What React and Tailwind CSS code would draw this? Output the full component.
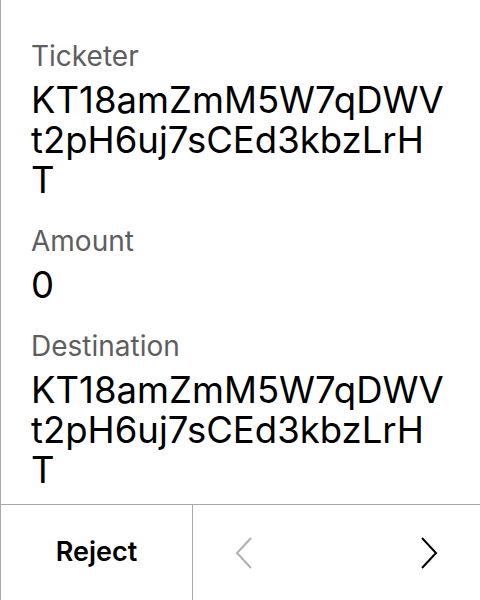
import React from 'react';

// address wraps the same way the device shows it
const Field = ({ label, lines }) => (
  <div className="flex flex-col">
    <p className="text-[28px] leading-9 text-[#5e5e5e]">{label}</p>
    <div className="mt-1.5 text-[36.5px] leading-10 text-black whitespace-nowrap">
      {lines.map((line, i) => (
        <p key={i}>{line}</p>
      ))}
    </div>
  </div>
);

const App = () => {
  const address = ['KT18amZmM5W7qDWV', 't2pH6uj7sCEd3kbzLrH', 'T'];

  return (
    <div className="w-[480px] h-[600px] bg-white flex flex-col border-l border-[#aaaaaa] font-['Inter',sans-serif]">
      <div className="flex-1 flex flex-col gap-[23px] pl-[30px] pr-[30px] pt-[38px]">
        <Field label="Ticketer" lines={address} />
        <Field label="Amount" lines={['0']} />
        <Field label="Destination" lines={address} />
      </div>

      <div className="h-24 flex border-t border-[#aaaaaa]">
        <button className="w-[192px] flex items-center justify-center text-[27px] font-semibold text-black border-r border-[#aaaaaa]">
          Reject
        </button>
        <div className="flex-1 flex items-center justify-between px-[42px]">
          <svg width="18" height="32" viewBox="0 0 18 32" fill="none" stroke="#b0b0b0" strokeWidth="2">
            <path d="M16 1 L2 16 L16 31" />
          </svg>
          <svg width="18" height="32" viewBox="0 0 18 32" fill="none" stroke="#000000" strokeWidth="2">
            <path d="M2 1 L16 16 L2 31" />
          </svg>
        </div>
      </div>
    </div>
  );
};

export default App;
